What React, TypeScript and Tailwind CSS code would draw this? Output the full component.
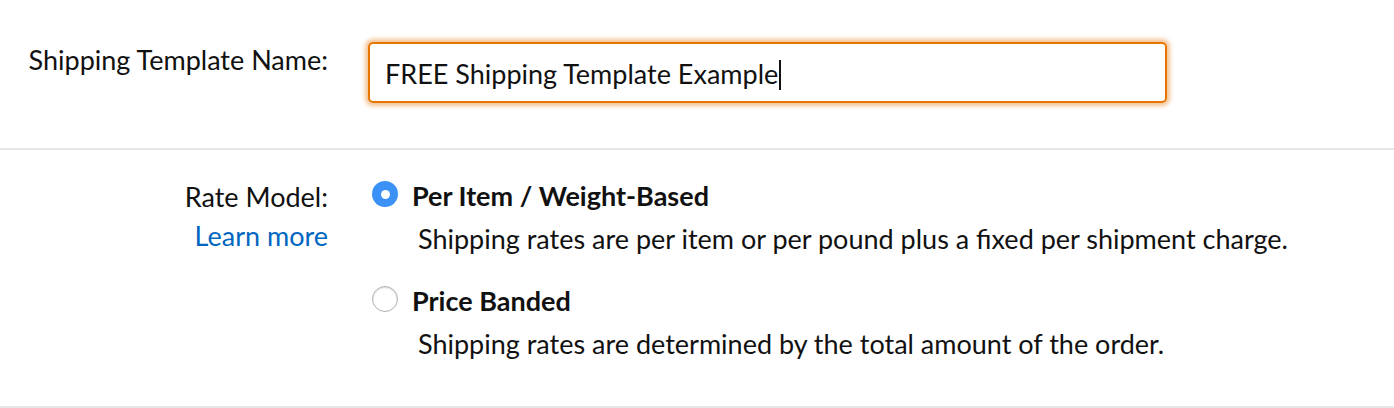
import React from "react";

export default function App() {
  return (
    <div className="w-[1394px] h-[408px] bg-white text-[#111] overflow-hidden" style={{ fontFamily: "Lato, 'Open Sans', sans-serif" }}>
      <div className="flex pt-[42px] pb-[45px] border-b-2 border-[#e7e7e7]">
        <div className="w-[328px] text-right text-[27px] leading-[30px] pt-[3px]">Shipping Template Name:</div>
        <div className="ml-[40px]">
          <div className="w-[799px] h-[61px] border-2 border-[#e77600] rounded-[5px] shadow-[0_0_4px_3px_rgba(228,121,17,0.45)] flex items-center pl-[15px] pt-[4px] text-[27px]">
            <span>FREE Shipping Template Example</span>
            <span className="inline-block w-[2px] h-[30px] bg-[#111] ml-[1px]"></span>
          </div>
        </div>
      </div>
      <div className="flex pt-[24px] h-[258px] border-b-2 border-[#e7e7e7]">
        <div className="w-[328px] text-right text-[27px] leading-[39px] pt-[3px] flex flex-col items-end">
          <span>Rate Model:</span>
          <span className="text-[#0066c0]">Learn more</span>
        </div>
        <div className="ml-[44px] flex flex-col gap-[19px]">
          <div className="flex gap-[14px]">
            <div className="mt-[7px] w-[26px] h-[26px] rounded-full bg-[#3b91f5] flex items-center justify-center shrink-0">
              <div className="w-[9px] h-[9px] rounded-full bg-white"></div>
            </div>
            <div>
              <div className="font-bold text-[27px] leading-[43px]">Per Item / Weight-Based</div>
              <div className="text-[27px] leading-[43px] pl-[6px]">Shipping rates are per item or per pound plus a fixed per shipment charge.</div>
            </div>
          </div>
          <div className="flex gap-[14px]">
            <div className="mt-[7px] w-[26px] h-[26px] rounded-full bg-white border border-[#adb1b8] shadow-[inset_0_1px_2px_rgba(0,0,0,0.15)] shrink-0"></div>
            <div>
              <div className="font-bold text-[27px] leading-[43px]">Price Banded</div>
              <div className="text-[27px] leading-[43px] pl-[6px]">Shipping rates are determined by the total amount of the order.</div>
            </div>
          </div>
        </div>
      </div>
    </div>
  );
}
